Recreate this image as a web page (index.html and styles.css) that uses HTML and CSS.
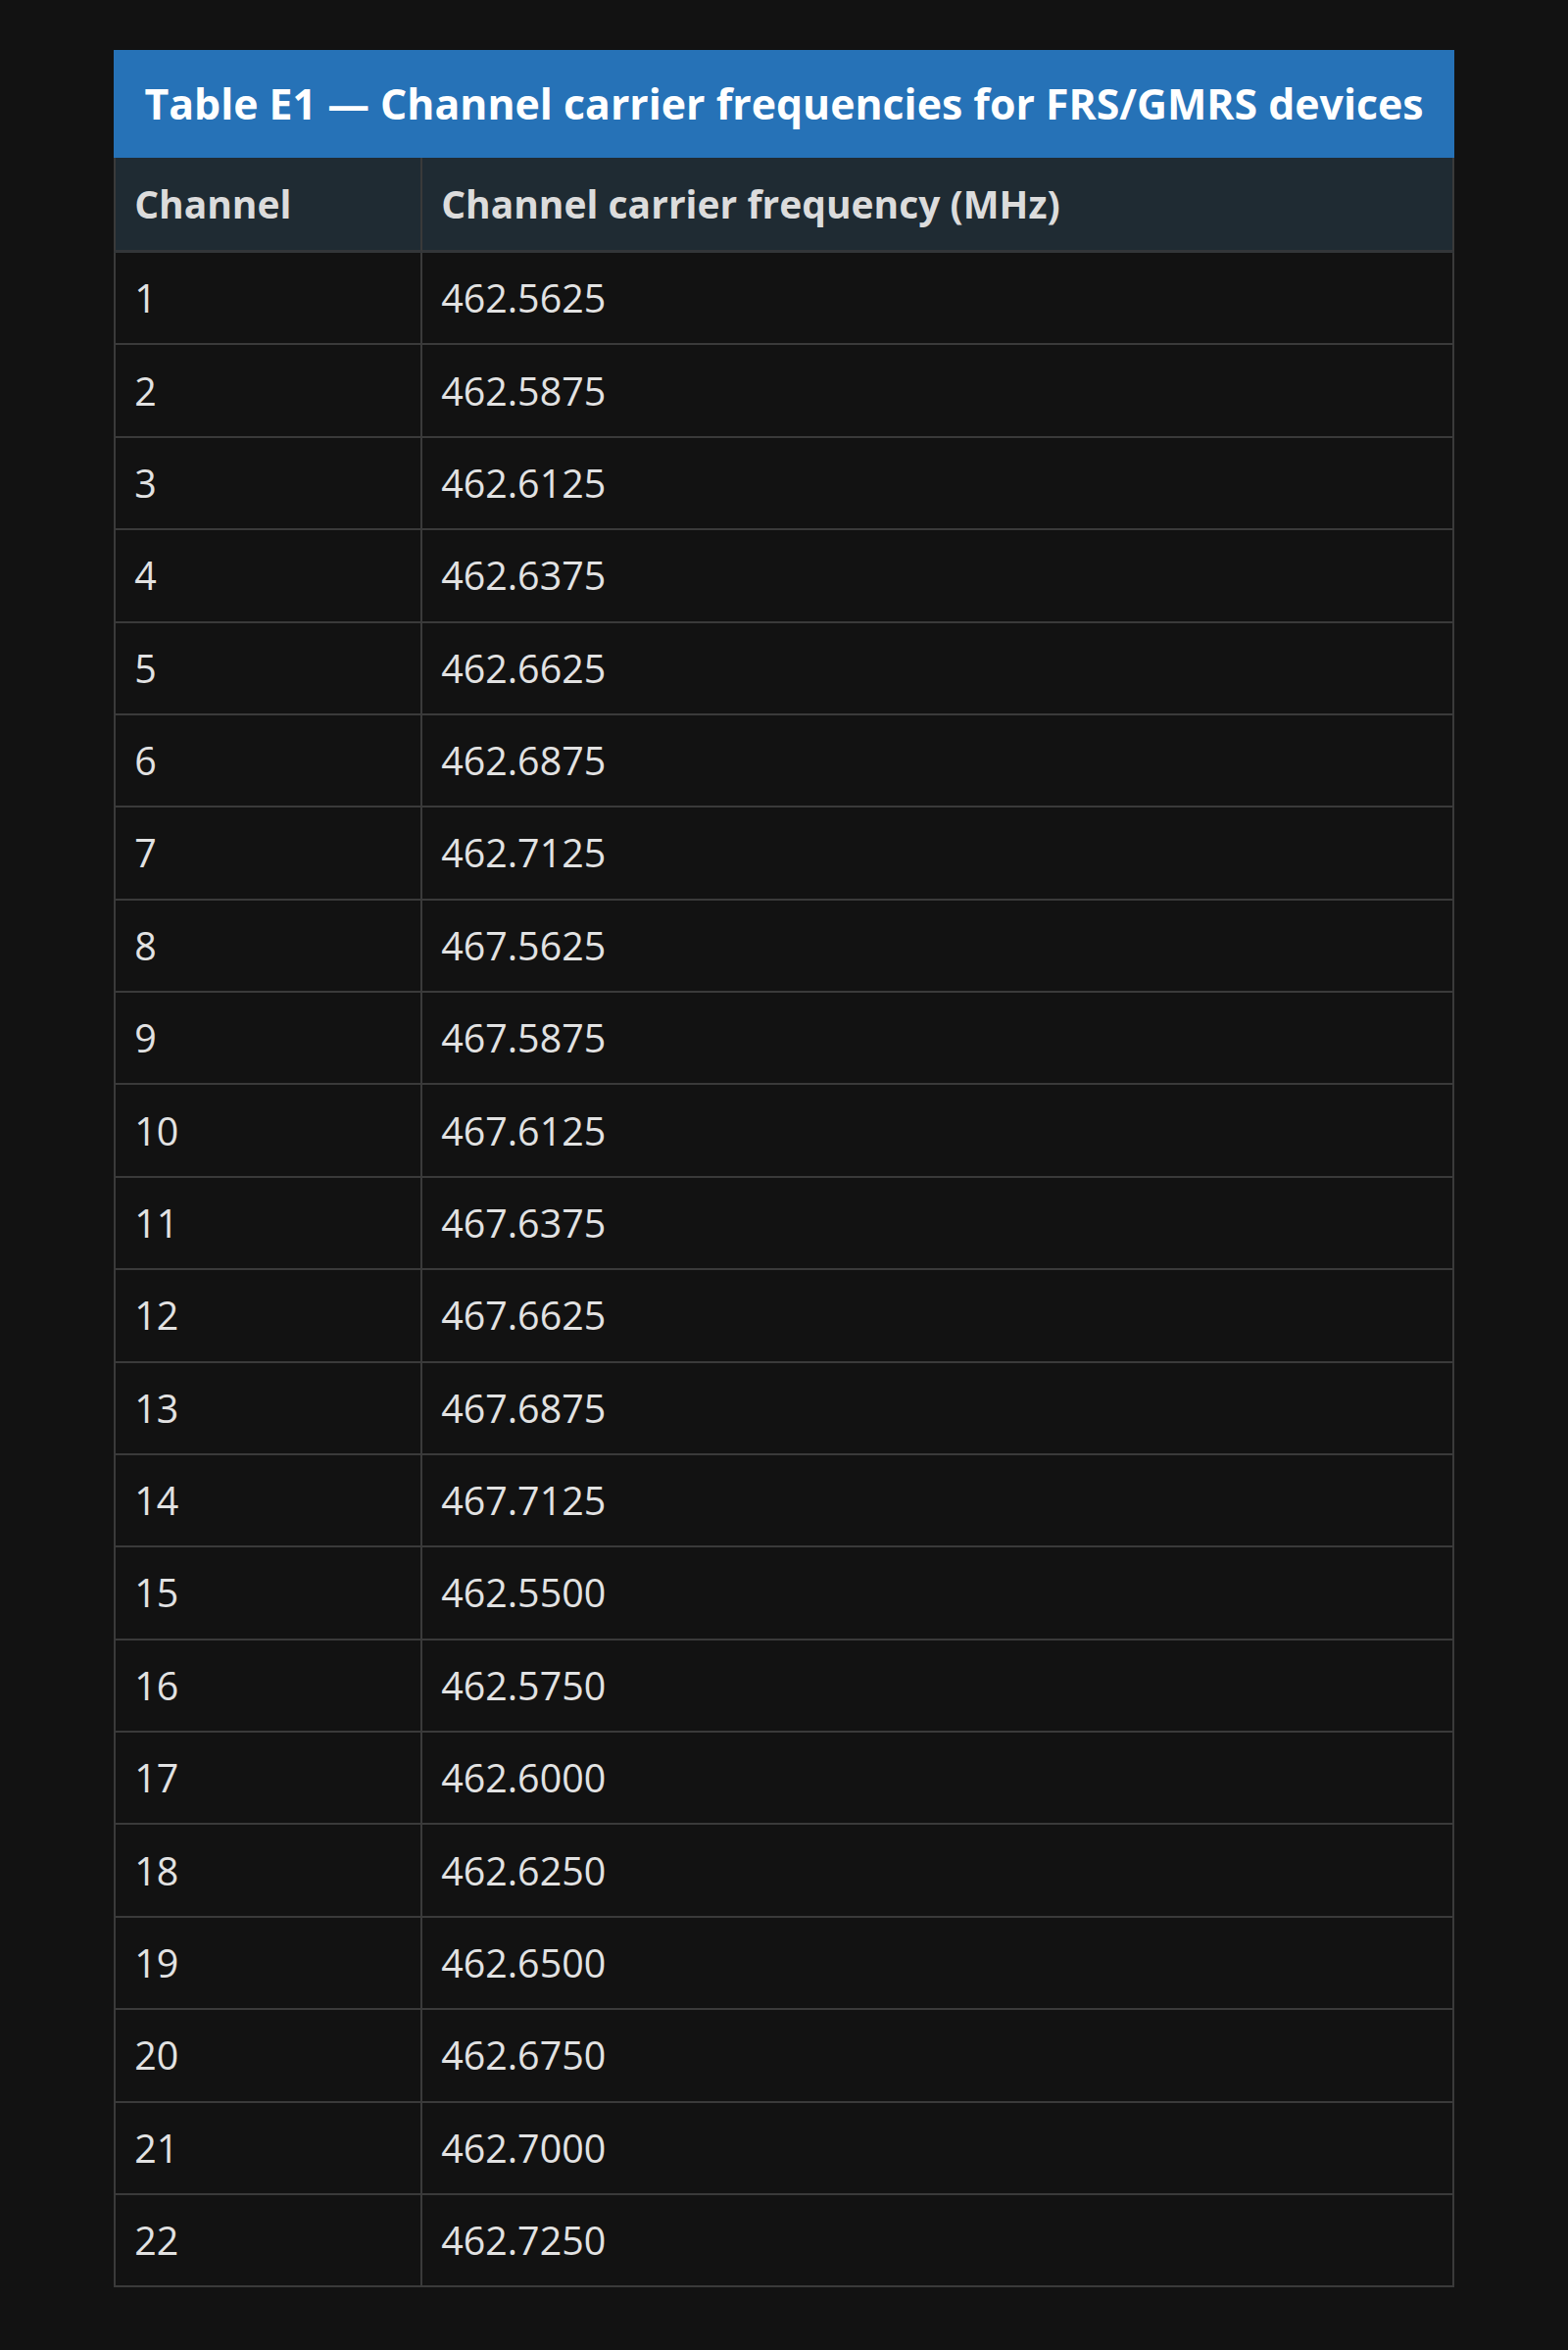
FILE: index.html
```html
<!DOCTYPE html>
<html lang="en">
<head>
<meta charset="utf-8">
<title>Table E1</title>
<link rel="stylesheet" href="styles.css">
</head>
<body>
<main class="wrap">
  <table class="freq">
    <caption class="title">Table E1 — Channel carrier frequencies for FRS/GMRS devices</caption>
    <thead>
      <tr><th class="c1">Channel</th><th class="c2">Channel carrier frequency (MHz)</th></tr>
    </thead>
    <tbody>
      <tr><td class="c1">1</td><td class="c2">462.5625</td></tr>
      <tr><td class="c1">2</td><td class="c2">462.5875</td></tr>
      <tr><td class="c1">3</td><td class="c2">462.6125</td></tr>
      <tr><td class="c1">4</td><td class="c2">462.6375</td></tr>
      <tr><td class="c1">5</td><td class="c2">462.6625</td></tr>
      <tr><td class="c1">6</td><td class="c2">462.6875</td></tr>
      <tr><td class="c1">7</td><td class="c2">462.7125</td></tr>
      <tr><td class="c1">8</td><td class="c2">467.5625</td></tr>
      <tr><td class="c1">9</td><td class="c2">467.5875</td></tr>
      <tr><td class="c1">10</td><td class="c2">467.6125</td></tr>
      <tr><td class="c1">11</td><td class="c2">467.6375</td></tr>
      <tr><td class="c1">12</td><td class="c2">467.6625</td></tr>
      <tr><td class="c1">13</td><td class="c2">467.6875</td></tr>
      <tr><td class="c1">14</td><td class="c2">467.7125</td></tr>
      <tr><td class="c1">15</td><td class="c2">462.5500</td></tr>
      <tr><td class="c1">16</td><td class="c2">462.5750</td></tr>
      <tr><td class="c1">17</td><td class="c2">462.6000</td></tr>
      <tr><td class="c1">18</td><td class="c2">462.6250</td></tr>
      <tr><td class="c1">19</td><td class="c2">462.6500</td></tr>
      <tr><td class="c1">20</td><td class="c2">462.6750</td></tr>
      <tr><td class="c1">21</td><td class="c2">462.7000</td></tr>
      <tr><td class="c1">22</td><td class="c2">462.7250</td></tr>
    </tbody>
  </table>
</main>
</body>
</html>
```

FILE: styles.css
```css
html, body {
  margin: 0;
  padding: 0;
  background: #121212;
}
body {
  font-family: "Open Sans", "Noto Sans", "DejaVu Sans", sans-serif;
  color: #e2e2e2;
}
.wrap {
  width: 1368px;
  margin: 0 auto;
  padding: 51px 0 64px;
}
.freq {
  width: 100%;
  border-collapse: separate;
  border-spacing: 0;
  table-layout: fixed;
}
.title {
  background: #2672b7;
  color: #ffffff;
  font-weight: 700;
  font-size: 42.8px;
  line-height: 52px;
  padding: 29px 20px;
  text-align: center;
  white-space: nowrap;
}
.freq th,
.freq td {
  text-align: left;
  font-size: 39.4px;
  line-height: 52px;
  padding: 20.2px 19.2px 20.2px 19.2px;
  border-right: 2px solid #3a3a3a;
  border-bottom: 2px solid #3a3a3a;
}
.freq .c1 {
  width: 315px;
  border-left: 2px solid #3a3a3a;
  box-sizing: border-box;
}
.freq th {
  background: #1f2b33;
  color: #dcdcdc;
  font-weight: 700;
  font-size: 39px;
  padding-top: 21px;
  padding-bottom: 21px;
  border-bottom: 3px solid #333639;
}
.freq td {
  background: #121212;
  font-weight: 400;
}
```
